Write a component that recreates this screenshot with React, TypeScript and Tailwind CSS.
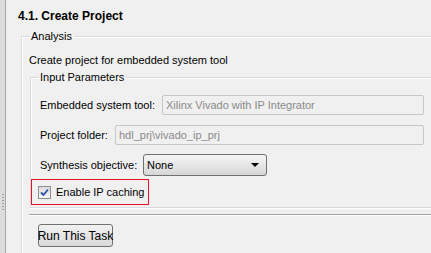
import React from "react";

const font = { fontFamily: '"Liberation Sans", Arial, sans-serif' };

function Dropdown() {
  return (
    <div className="flex h-[22px] w-[124px] items-center justify-between rounded-[3px] border border-[#707070] bg-gradient-to-b from-[#f6f6f6] to-[#d6d6d6] pl-[3px] pr-[7px] text-[11px] text-black">
      <span>None</span>
      <svg width="8" height="4" viewBox="0 0 8 4">
        <path d="M0 0 L8 0 L4 4 Z" fill="#000" />
      </svg>
    </div>
  );
}

export default function App() {
  return (
    <div
      className="flex h-[253px] w-[431px] overflow-hidden bg-[#f0f0f0] text-[11px] leading-[14px] text-black"
      style={font}
    >
      <div className="flex w-[6px] shrink-0 flex-col items-center justify-end border-r border-[#a8a8a8] bg-[#dcdcdc] pb-[43px]">
        <div className="flex flex-col gap-[2px]">
          {[0, 1, 2, 3, 4, 5].map((i) => (
            <div key={i} className="h-[1px] w-[2px] bg-[#9c9c9c]" />
          ))}
        </div>
      </div>
      <div className="flex min-w-0 flex-1 flex-col">
        <div className="h-[29px] shrink-0 pl-[12px] pt-[9px] text-[12px] font-bold leading-[14px]">
          4.1. Create Project
        </div>
        <fieldset className="ml-[15px] w-[460px] shrink-0 border border-[#d3dbe1] shadow-[inset_1px_1px_0_#ffffff]">
          <legend className="ml-[7px] px-[2px] leading-[14px]">Analysis</legend>
          <div className="mt-[10px] pl-[7px] leading-[14px]">Create project for embedded system tool</div>
          <fieldset className="ml-[8px] mt-[3px] border border-[#d3dbe1] pb-[2px] shadow-[inset_1px_1px_0_#ffffff,0_1px_0_#ffffff]">
            <legend className="ml-[7px] px-[2px] leading-[14px]">Input Parameters</legend>
            <div className="mt-[11px] flex h-[20px] items-center pl-[9px]">
              <span className="w-[122px]">Embedded system tool:</span>
              <div className="flex h-[20px] w-[262px] items-center rounded-[2px] border border-[#c6c6c6] pl-[3px] text-[#8a8a8a]">
                Xilinx Vivado with IP Integrator
              </div>
            </div>
            <div className="mt-[10px] flex h-[20px] items-center pl-[9px]">
              <span className="w-[75px]">Project folder:</span>
              <div className="flex h-[20px] w-[309px] items-center rounded-[2px] border border-[#c6c6c6] pl-[3px] text-[#8a8a8a]">
                hdl_prj\vivado_ip_prj
              </div>
            </div>
            <div className="mt-[9px] flex h-[22px] items-center pl-[9px]">
              <span className="w-[103px]">Synthesis objective:</span>
              <Dropdown />
            </div>
            <div className="mt-[3px] flex h-[26px] w-[118px] items-center border border-[#e81123] pl-[6px]">
              <div className="flex h-[13px] w-[13px] items-center justify-center border border-[#8e8f8f] bg-gradient-to-b from-[#dcdcdc] to-[#f6f6f6]">
                <svg width="9" height="9" viewBox="0 0 9 9">
                  <path d="M1 4.5 L3.5 7 L8 1.5" stroke="#2a4fb0" strokeWidth="1.8" fill="none" />
                </svg>
              </div>
              <span className="ml-[5px]">Enable IP caching</span>
            </div>
          </fieldset>
          <div className="ml-[7px] mt-[6px] h-[2px] border-t border-[#a0a0a0] bg-white" />
          <div className="ml-[16px] mt-[8px] flex h-[23px] w-[75px] items-center justify-center whitespace-nowrap rounded-[3px] border border-[#707070] bg-gradient-to-b from-[#f2f2f2] to-[#d9d9d9] text-[12px] leading-[14px]">
            Run This Task
          </div>
          <div className="h-[20px]" />
        </fieldset>
      </div>
    </div>
  );
}
